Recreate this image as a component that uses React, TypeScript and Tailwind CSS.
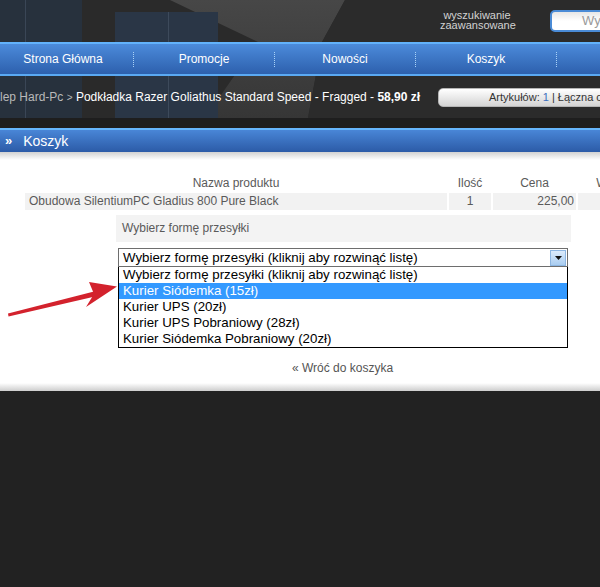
import React from 'react';

const navItems = ['Strona Główna', 'Promocje', 'Nowości', 'Koszyk', ''];

const options = [
  'Wybierz formę przesyłki (kliknij aby rozwinąć listę)',
  'Kurier Siódemka (15zł)',
  'Kurier UPS (20zł)',
  'Kurier UPS Pobraniowy (28zł)',
  'Kurier Siódemka Pobraniowy (20zł)',
];

// background artwork of the shop header
const HeaderArt = () => (
  <svg className="absolute inset-0" width="600" height="118" viewBox="0 0 600 118">
    <defs>
      <linearGradient id="wedge" x1="0" y1="0" x2="0" y2="1">
        <stop offset="0" stopColor="#474747" />
        <stop offset="1" stopColor="#363636" />
      </linearGradient>
    </defs>
    <rect width="600" height="118" fill="#2a2a2a" />
    <polygon points="170,0 345,0 322,42 308,118 205,118 258,42" fill="url(#wedge)" />
    <polygon points="345,0 600,0 600,118 308,118 322,42" fill="#2b2b2b" />
    <rect x="0" y="0" width="82" height="118" fill="#27313d" />
    <line x1="25.5" y1="0" x2="25.5" y2="118" stroke="#3a4656" />
    <rect x="115" y="12" width="103" height="106" fill="#2a3646" />
    <line x1="168.5" y1="12" x2="168.5" y2="118" stroke="#3d4a5b" />
  </svg>
);

const Arrow = () => (
  <svg className="absolute left-0 top-0 pointer-events-none" width="130" height="200" viewBox="0 152 130 200">
    <polygon points="8,313.5 94,291.5 95,296.5 8.5,316.5" fill="#d3222d" />
    <polygon points="117,286.5 89,282 94,294 86,307" fill="#d3222d" />
  </svg>
);

export default function App() {
  return (
    <div className="w-[600px] h-[587px] overflow-hidden bg-[#222222] font-['Liberation_Sans',Arial,sans-serif]">
      {/* header with search, menu and breadcrumb */}
      <header className="relative h-[118px] overflow-hidden">
        <HeaderArt />

        <div className="relative flex h-[42px] items-start">
          <div className="ml-[440px] w-[74px] pt-[10px] text-center text-[11px] leading-[10px] text-[#d2d2d2]">
            wyszukiwanie zaawansowane
          </div>
          <svg className="ml-[17px] mt-[17px]" width="2" height="8" viewBox="0 0 2 8">
            <rect x="0" y="0" width="1" height="1" fill="#d0d0d0" />
            <rect x="0" y="3" width="1" height="1" fill="#d0d0d0" />
            <rect x="0" y="6" width="1" height="1" fill="#d0d0d0" />
          </svg>
          <div className="ml-[19px] mt-[10px] flex h-[22px] w-[120px] shrink-0 items-center rounded-[5px] border-2 border-[#4a8bd6] bg-gradient-to-b from-[#e6e6e6] via-white to-white pl-[30px] text-[13px] text-[#9a9a9a]">
            Wyszukaj
          </div>
        </div>

        <nav className="relative flex h-[34px] items-center border-y-2 border-t-[#62b2fb] border-b-[#5aa9f3] bg-gradient-to-b from-[#4c8bdb] to-[#2d60ad]">
          <div className="ml-[-7px] flex items-center">
            {navItems.map((item, i) => (
              <React.Fragment key={i}>
                <div className="w-[140px] text-center text-[12px] leading-[30px] text-white">{item}</div>
                {i < navItems.length - 1 && (
                  <div className="h-[15px] w-px border-l border-dotted border-[#a9d2f7]" />
                )}
              </React.Fragment>
            ))}
          </div>
        </nav>

        <div className="relative flex h-[42px] items-center">
          <div className="ml-[-14px] w-[452px] shrink-0 whitespace-nowrap text-[12px] text-white">
            <span className="text-[#b9b9b9]">Sklep Hard-Pc</span>
            <span className="text-[#b9b9b9]"> <span className="text-[10px]">&gt;</span> </span>
            Podkładka Razer Goliathus Standard Speed - Fragged - <b>58,90 zł</b>
          </div>
          <div className="flex h-[19px] w-[220px] shrink-0 items-center whitespace-nowrap rounded-[5px] border border-[#b5b5b5] bg-gradient-to-b from-white to-[#d4d4d4] pl-[50px] text-[11px] text-[#333]">
            Artykułów: <span className="mx-[3px] text-[#3b6fc0]">1</span> | Łączna cena: 225,00 zł
          </div>
        </div>
      </header>

      <div className="h-[10px] bg-[#1e1e1e]" />

      {/* section title */}
      <div className="flex h-[24px] items-center border-t-2 border-[#66b6fc] bg-gradient-to-b from-[#4986d7] to-[#2c5ba7] text-white">
        <span className="ml-[5px] text-[13px] font-bold">»</span>
        <span className="ml-[11px] text-[14px]">Koszyk</span>
      </div>

      <main className="relative h-[231px] bg-white">
        <div className="h-[8px] bg-gradient-to-b from-[#d2d2d2] to-white" />

        <div className="ml-[25px] mt-[15px] grid w-[700px] grid-cols-[422px_42px_83px_80px] gap-[2px] text-[12px] leading-[16px] text-[#5a5a5a]">
          <div className="text-center">Nazwa produktu</div>
          <div className="text-center">Ilość</div>
          <div className="text-center">Cena</div>
          <div className="text-center">Wartość</div>
          <div className="h-[17px] bg-[#f2f2f2] pl-[4px] leading-[17px]">Obudowa SilentiumPC Gladius 800 Pure Black</div>
          <div className="h-[17px] bg-[#f2f2f2] text-center leading-[17px]">1</div>
          <div className="h-[17px] bg-[#f2f2f2] pr-[2px] text-right leading-[17px]">225,00</div>
          <div className="h-[17px] bg-[#f2f2f2] pr-[2px] text-right leading-[17px]">225,00</div>
        </div>

        <div className="ml-[116px] mt-[5px] h-[27px] w-[455px] bg-[#f3f3f3] pl-[6px] text-[12px] leading-[27px] text-[#5a5a5a]">
          Wybierz formę przesyłki
        </div>

        <div className="ml-[118px] mt-[6px] w-[450px] text-[13.3px] text-black">
          <div className="flex h-[19px] items-center border border-[#6e6e6e] pl-[4px]">
            <span className="flex-1 whitespace-nowrap">{options[0]}</span>
            <span className="mr-px flex h-[16px] w-[16px] items-center justify-center border border-[#8db6e2] bg-gradient-to-b from-[#dcebfb] to-[#a9cdf1]">
              <svg width="7" height="4" viewBox="0 0 7 4">
                <polygon points="0,0 7,0 3.5,4" fill="#111" />
              </svg>
            </span>
          </div>
          <div className="border-x border-b border-black">
            {options.map((o, i) => (
              <div
                key={i}
                className={`h-[16px] whitespace-nowrap pl-[4px] leading-[16px] ${i === 1 ? 'bg-[#3399ff] text-white' : ''}`}
              >
                {o}
              </div>
            ))}
          </div>
        </div>

        <div className="ml-[292px] mt-[12px] text-[12px] leading-[16px] text-[#555]">« Wróć do koszyka</div>

        <Arrow />
      </main>

      <div className="h-[8px] bg-gradient-to-b from-white to-[#cdcdcd]" />
    </div>
  );
}
